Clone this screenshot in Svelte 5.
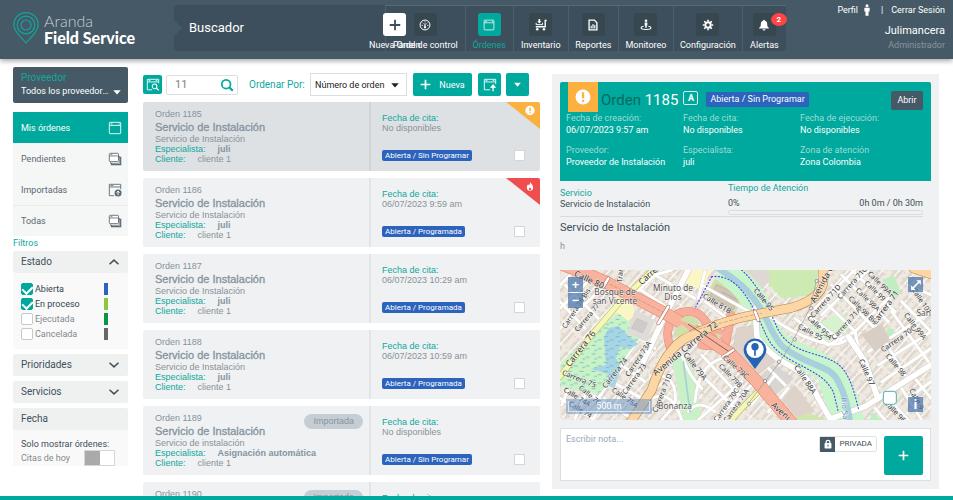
<script>
  const nav = [
    { label: 'Panel de control', icon: 'gauge', grow: 80 },
    { label: 'Órdenes', icon: 'window', grow: 48, active: true },
    { label: 'Inventario', icon: 'cart', grow: 55 },
    { label: 'Reportes', icon: 'report', grow: 50 },
    { label: 'Monitoreo', icon: 'monitor', grow: 55 },
    { label: 'Configuración', icon: 'gear', grow: 69 },
    { label: 'Alertas', icon: 'bell', grow: 44, badge: 2 },
  ];

  const views = [
    { label: 'Pendientes', icon: 'stack' },
    { label: 'Importadas', icon: 'upload' },
    { label: 'Todas', icon: 'stack', split: true },
  ];

  let states = $state([
    { label: 'Abierta', on: true, color: '#2c63bd' },
    { label: 'En proceso', on: true, color: '#8cc63f' },
    { label: 'Ejecutada', on: false, color: '#0b9444' },
    { label: 'Cancelada', on: false, color: '#666666' },
  ]);

  const orders = [
    { id: 1185, sub: 'Servicio de Instalación', who: 'juli', date: 'No disponibles', status: 'Abierta / Sin Programar', flag: 'alert', selected: true },
    { id: 1186, sub: 'Servicio de Instalación', who: 'juli', date: '06/07/2023 9:59 am', status: 'Abierta / Programada', flag: 'fire' },
    { id: 1187, sub: 'Servicio de Instalación', who: 'juli', date: '06/07/2023 10:29 am', status: 'Abierta / Programada' },
    { id: 1188, sub: 'Servicio de Instalación', who: 'juli', date: '06/07/2023 10:59 am', status: 'Abierta / Programada' },
    { id: 1189, sub: 'Servicio de instalación', who: 'Asignación automática', date: 'No disponibles', status: 'Abierta / Sin Programar', imported: true },
    { id: 1190, sub: 'Servicio de instalación', who: 'Asignación automática', date: 'No disponibles', status: 'Abierta / Sin Programar', imported: true },
  ];

  const fields = [
    ['Fecha de creación:', '06/07/2023 9:57 am'],
    ['Fecha de cita:', 'No disponibles'],
    ['Fecha de ejecución:', 'No disponibles'],
    ['Proveedor:', 'Proveedor de Instalación'],
    ['Especialista:', 'juli'],
    ['Zona de atención', 'Zona Colombia'],
  ];

  // Street names: text, centre x, centre y, angle, size
  const streets = [
    ['Calle 80', 102, 46, 25, 26], ['Carrera 76', 78, 252, -52, 26], ['Avenida Carrera 72', 392, 252, -39, 27],
    ['Carre', 280, 34, -42, 26], ['Avenida C', 802, 58, -62, 26], ['Aveni', 676, 440, 42, 26],
    ['Tran', 196, 30, -86, 22], ['Carrera 78 Bis', 64, 130, -57, 21], ['Carrera 77', 96, 158, -50, 21],
    ['Calle 81B', 486, 116, 32, 22], ['Calle 95', 626, 104, 50, 22], ['Calle 79A', 420, 304, 52, 23],
    ['Calle 79C', 542, 306, 42, 22], ['Calle 79B', 526, 332, 46, 21], ['Calle 88A', 750, 344, 56, 23],
    ['Carrera 73A', 250, 282, -56, 22], ['Carrera 74', 180, 324, -52, 22], ['Carrera 73', 238, 342, -54, 22],
    ['Carrera 75', 72, 342, 22, 22], ['Carrera 71D', 322, 384, -68, 22], ['Carrera 70C', 514, 420, -55, 21],
    ['Carrera 70A', 544, 422, -55, 21], ['Calle 74A', 66, 396, 32, 21], ['Calle 76', 104, 390, 40, 21],
    ['Calle 75A', 210, 398, 35, 21], ['Calle 74', 76, 434, 32, 21], ['Carrera 71D', 812, 108, -48, 22],
    ['Carrera 71C', 892, 54, -48, 22], ['Carrera 71A', 874, 176, -48, 22], ['Carrera 71', 992, 128, -54, 24],
    ['Calle 99A', 974, 54, 44, 21], ['Calle 99', 960, 78, 44, 21], ['Calle 98A', 938, 104, 44, 21],
    ['Calle 98 Bis', 924, 136, 44, 21], ['Calle 95A', 794, 188, 44, 22], ['Calle 95', 766, 202, 28, 22],
    ['Calle 99A', 1080, 184, 52, 22], ['Calle 101', 1100, 108, 56, 21], ['Carrera 70C', 1030, 222, -35, 22],
    ['Calle 98', 1022, 300, 50, 22], ['Calle 97', 934, 322, 66, 23], ['Calle 96', 1020, 440, 46, 22],
    ['Calle 9', 1084, 402, 62, 22],
  ];

  const minorRoads = [
    'M15 60 L60 15', 'M15 130 L120 30', 'M15 190 L150 60', 'M30 60 L130 160', 'M15 110 L90 190',
    'M225 100 L300 30 L420 100', 'M250 70 L340 130', 'M300 30 L350 15', 'M210 190 L300 250', 'M180 270 L250 190',
    'M130 400 L300 150', 'M170 430 L290 260', 'M200 300 L270 350', 'M15 340 L130 400 L230 460', 'M15 400 L110 460',
    'M50 350 L20 420', 'M100 370 L60 460', 'M150 400 L110 470', 'M170 350 L260 400', 'M300 330 Q370 330 360 420 L320 465',
    'M290 400 Q350 370 380 465', 'M380 270 Q400 330 440 370', 'M440 270 L560 400', 'M500 250 L610 370', 'M420 410 Q430 300 500 280',
    'M430 465 L560 350', 'M480 465 L600 350', 'M450 340 L540 430', 'M400 440 Q430 400 480 440', 'M440 60 L600 150',
    'M450 110 L530 170', 'M450 20 L430 100', 'M640 150 Q700 200 790 230 Q850 250 880 220', 'M720 160 L820 240 L900 200 L1010 90',
    'M780 130 L900 15', 'M800 150 L940 15', 'M830 60 L960 190', 'M860 30 L1000 170', 'M890 15 L1020 140', 'M760 150 L860 230',
    'M820 120 L900 200', 'M900 200 L920 290 L960 380', 'M960 180 L1050 330', 'M1010 140 L1128 300', 'M1040 110 L1128 200',
    'M940 260 L1128 140', 'M970 300 L1128 200', 'M980 350 L1128 250', 'M1060 60 L1128 90', 'M1080 340 L1128 400', 'M990 390 L1060 465',
    'M1040 370 L1100 465', 'M1060 400 L1128 350', 'M660 330 L590 420', 'M700 370 L640 440', 'M620 290 L690 360', 'M960 430 L990 465',
  ];
</script>

{#snippet icon(name)}
  <svg class="ico" viewBox="0 0 16 16" fill="none" stroke="currentColor" aria-hidden="true">
    {#if name === 'gauge'}
      <circle cx="8" cy="8" r="6.6" stroke-width="1.3" /><path d="M8 12V6" stroke-width="1.6" /><circle cx="8" cy="11" r="1.5" fill="currentColor" stroke="none" />
      <path d="M3.5 8.5h1.6M11 8.5h1.6M4.8 5l1 1M11.2 5l-1 1M8 3.2v1.2" stroke-width="1.2" />
    {:else if name === 'window'}
      <rect x="1.5" y="1.5" width="13" height="13" rx=".8" stroke-width="1" /><path d="M1.5 5h13M3 3.3h2M12 3.3h1.4" stroke-width="1" />
    {:else if name === 'cart'}
      <path d="M15.500 2h-1.900v8.300H1" stroke-width="1.800" /><path d="M1.500 5.200v2.300h8.500V5.200" stroke-width="1.300" /><path d="M4.700 0h2.200v3h1.700L5.800 6 3 3h1.700z" fill="currentColor" stroke="none" />
      <circle cx="3" cy="13.600" r="1.700" fill="currentColor" stroke="none" /><circle cx="12" cy="13.600" r="1.700" fill="currentColor" stroke="none" />
    {:else if name === 'report'}
      <path d="M2.8 1.5h7L13.2 5v9.5H2.8z" stroke-width="1.8" /><path d="M5.6 12.5V9M8 12.5V6.5M10.4 12.5V8" stroke-width="1.5" />
    {:else if name === 'monitor'}
      <circle cx="8" cy="2.4" r="1.7" fill="currentColor" stroke="none" /><path d="M6.2 4.8h3.6v4H9v3H7v-3h-.8z" fill="currentColor" stroke="none" />
      <path d="M4.8 9.6C2.6 10 1.4 10.8 1.4 11.8c0 1.4 3 2.3 6.6 2.3s6.6-.9 6.6-2.3c0-1-1.2-1.8-3.4-2.2" stroke-width="1.4" />
    {:else if name === 'gear'}
      <circle cx="8" cy="8" r="3.6" stroke-width="2.6" /><path d="M8 1v2.4M8 12.6V15M1 8h2.4M12.6 8H15M3 3l1.8 1.8M11.2 11.2 13 13M13 3l-1.8 1.8M4.8 11.2 3 13" stroke-width="2.2" />
    {:else if name === 'bell'}
      <path d="M8 1c.8 0 1.2.5 1.2 1.2 2 .5 3 2 3 4 0 3.200.7 4.300 2.300 5.600v.8H1.500v-.8c1.600-1.300 2.300-2.400 2.300-5.600 0-2 1-3.500 3-4C6.800 1.500 7.200 1 8 1z" fill="currentColor" stroke="none" /><path d="M6 13.600h4a2 1.800 0 0 1-4 0z" fill="currentColor" stroke="none" />
    {:else if name === 'stack'}
      <path d="M4 12.500v2h10.500V6h-2" stroke-width="1.400" /><path d="M3 11v2h10V4.500" stroke-width=".8" /><rect x="1.500" y="1.500" width="10.500" height="9.500" rx="1" fill="#fff" stroke-width="1" /><path d="M1.500 4.500H12M3 3h2" stroke-width=".9" />
    {:else if name === 'upload'}
      <path d="M7 14.500H1.500v-13h13V7M1.500 4.500h13M3 3h3" stroke-width="1" /><circle cx="11.500" cy="11.500" r="4" fill="currentColor" stroke="none" /><path d="M11.500 14v-4.500M9.800 11l1.700-1.800 1.700 1.800" stroke="#fff" stroke-width="1.100" />
    {:else if name === 'find'}
      <path d="M7 13.500H1.500v-12h13V6M1.500 4.500h13M3 3h2M11 3h2" stroke-width="1" /><circle cx="9.800" cy="9.500" r="2.700" stroke-width="1.200" /><path d="m12 11.700 2.500 2.500" stroke-width="1.400" />
    {:else if name === 'send'}
      <path d="M8 13.500H1.500v-12h13V7M1.500 4.500h13M3 3h2M11 3h2" stroke-width="1" /><path d="M11.500 15V9M9.500 10.500l2-2.500 2 2.500z" fill="currentColor" stroke-width="1.500" />
    {:else if name === 'search'}
      <circle cx="7" cy="7" r="5" stroke-width="2" /><path d="m10.600 10.600 4 4" stroke-width="2.400" />
    {:else if name === 'plus'}
      <path d="M8 1v14M1 8h14" stroke-width="2.400" />
    {:else if name === 'down'}
      <path d="M2 5h12l-6 7z" fill="currentColor" stroke="none" />
    {:else if name === 'chevdown'}
      <path d="m2 5 6 5.500L14 5" stroke-width="2" />
    {:else if name === 'chevup'}
      <path d="m2 11 6-5.500 6 5.500" stroke-width="2" />
    {:else if name === 'alert'}
      <circle cx="8" cy="8" r="7.500" fill="#fff" stroke="none" /><path d="M8 3.200v6M8 10.800v2" stroke="#fbb040" stroke-width="2.200" />
    {:else if name === 'fire'}
      <path d="M8.500.5c.5 3 4.500 5 4.500 9a5 5.300 0 0 1-10 0C3 7 4.300 6 4.800 4.500c1 .6 1.400 1.300 1.500 2C7.800 5 8.600 3 8.500.5z" fill="#fff" stroke="none" /><path d="M8 9c.3 1.200 2 1.600 2 3a2 1.800 0 0 1-4 0C6 11 7.200 10.400 8 9z" fill="#f04e4e" stroke="none" />
    {:else if name === 'person'}
      <circle cx="8" cy="2.200" r="2" fill="currentColor" stroke="none" /><path d="M4.500 5h7v5H10v5.500H6V10H4.500z" fill="currentColor" stroke="none" />
    {:else if name === 'lock'}
      <path d="M5 7V5a3 3 0 0 1 6 0v2" stroke-width="2" /><rect x="2.500" y="6.500" width="11" height="8.500" rx="1" fill="currentColor" stroke="none" /><path d="M8 9v3" stroke="#455a66" stroke-width="1.600" />
    {:else if name === 'expand'}
      <path d="m3.500 12.500 9-9" stroke-width="2" /><path d="M8.500 1.500h6v6zM1.500 8.500v6h6z" fill="currentColor" stroke="none" />
    {/if}
  </svg>
{/snippet}

<div class="app">
  <header class="top">
    <a class="brand" href="#inicio">
      <svg viewBox="0 0 26 32" fill="none" stroke="#10a79d" stroke-width="1.200" aria-hidden="true">
        <path d="M13 31C9 26 .8 20 .8 12.800a12.200 12.200 0 0 1 24.400 0C25.200 20 17 26 13 31z" />
        <circle cx="13" cy="13" r="8.800" /><circle cx="13" cy="13" r="5" />
      </svg>
      <span class="words"><span>Aranda</span><b>Field Service</b></span>
    </a>
    <div class="bar">
      <span class="finder">Buscador</span>
      <nav>
        <a class="new" href="#nueva"><span class="tile">{@render icon('plus')}</span><span>Nueva Orden</span></a>
        {#each nav as n}
          <a class="tab" class:active={n.active} href="#{n.icon}" style="flex-grow: {n.grow}">
            <span class="tile">{@render icon(n.icon)}{#if n.badge}<i class="badge">{n.badge}</i>{/if}</span>
            <span>{n.label}</span>
          </a>
        {/each}
      </nav>
    </div>
    <div class="user">
      <div class="links"><a href="#perfil">Perfil {@render icon('person')}</a><span>|</span><a href="#salir">Cerrar Sesión</a></div>
      <div class="name">Julimancera</div>
      <div class="role">Administrador</div>
    </div>
  </header>

  <main>
    <aside>
      <div class="provider">
        <label for="prov">Proveedor</label>
        <div class="pick"><select id="prov"><option>Todos los proveedores de servicio</option></select>{@render icon('down')}</div>
      </div>
      <a class="mine" href="#mis">Mis órdenes {@render icon('window')}</a>
      <div class="views">
        {#each views as v}
          <a href="#{v.label}" class:split={v.split}>{v.label} {@render icon(v.icon)}</a>
        {/each}
      </div>
      <div class="filters">Filtros</div>
      <button class="fold">Estado {@render icon('chevup')}</button>
      <div class="states">
        {#each states as s}
          <label class:off={!s.on}><input type="checkbox" bind:checked={s.on} /><span>{s.label}</span><i style="background: {s.color}"></i></label>
        {/each}
      </div>
      <button class="fold gap">Prioridades {@render icon('chevdown')}</button>
      <button class="fold gap">Servicios {@render icon('chevdown')}</button>
      <div class="fold gap">Fecha</div>
      <div class="dates">
        <span>Solo mostrar órdenes:</span>
        <label>Citas de hoy <input type="checkbox" /></label>
      </div>
    </aside>

    <section class="list">
      <div class="tools">
        <button class="sq" aria-label="Búsqueda avanzada">{@render icon('find')}</button>
        <div class="search"><input type="text" value="11" aria-label="Buscar" />{@render icon('search')}</div>
        <label for="sort">Ordenar Por:</label>
        <div class="sort"><select id="sort"><option>Número de orden</option></select>{@render icon('down')}</div>
        <button class="add">{@render icon('plus')} Nueva</button>
        <button class="sq wide" aria-label="Exportar">{@render icon('send')}</button>
        <button class="sq small" aria-label="Más">{@render icon('down')}</button>
      </div>
      {#each orders as o}
        <article class:selected={o.selected}>
          <div class="info">
            <span class="num">Orden {o.id}</span>
            <h3>Servicio de Instalación</h3>
            <span>{o.sub}</span>
            <span><em>Especialista:</em><b>{o.who}</b></span>
            <span><em>Cliente:</em>cliente 1</span>
            {#if o.imported}<span class="imported">Importada</span>{/if}
          </div>
          <div class="when">
            <em>Fecha de cita:</em>
            <span>{o.date}</span>
            <div class="foot"><span class="tag">{o.status}</span><input type="checkbox" aria-label="Seleccionar orden {o.id}" /></div>
            {#if o.flag}<span class="flag {o.flag}">{@render icon(o.flag)}</span>{/if}
          </div>
        </article>
      {/each}
    </section>

    <section class="detail">
      <div class="head">
        <div class="title">
          <span class="warn">{@render icon('alert')}</span>
          <h2>Orden <b>1185</b></h2>
          <span class="letter">A</span>
          <span class="status">Abierta / Sin Programar</span>
          <button>Abrir</button>
        </div>
        <dl>
          {#each fields as [k, v]}<div><dt>{k}</dt><dd>{v}</dd></div>{/each}
        </dl>
      </div>
      <div class="service">
        <div class="svc"><span class="teal">Servicio</span><span>Servicio de Instalación</span></div>
        <div class="time">
          <span class="teal">Tiempo de Atención</span>
          <div class="row"><span>0%</span><span>0h 0m / 0h 30m</span></div>
          <div class="progress"></div>
        </div>
      </div>
      <div class="desc">Servicio de Instalación</div>
      <div class="note-text">h</div>

      <div class="map">
        <svg viewBox="15 15 1113 450" preserveAspectRatio="xMidYMid slice" role="img" aria-label="Mapa de la orden">
          <defs>
            <pattern id="blocks" width="54" height="38" patternUnits="userSpaceOnUse" patternTransform="rotate(-48)">
              <rect width="54" height="38" fill="#eee9e1" /><path d="M4 8h44v8H4zM4 22h44v8H4z" fill="#ded7cd" /><path d="M14 8v8M25 8v8M37 8v8M20 22v8M33 22v8" stroke="#eee9e1" /><path d="M0 19h54" stroke="#fff" stroke-width="3" />
            </pattern>
            <pattern id="plots" width="44" height="40" patternUnits="userSpaceOnUse" patternTransform="rotate(38)">
              <path d="M5 12v2M24 5v2M35 26v2" stroke="#ee9a90" stroke-width="3" /><path d="M10 27h9v5h-9z" fill="#dcd3ca" />
            </pattern>
            <pattern id="reeds" width="36" height="26" patternUnits="userSpaceOnUse"><path d="M2 7h12M20 17h12M10 22h8" stroke="#55a9cf" stroke-width="2" /></pattern>
          </defs>
          <rect x="0" y="0" width="1140" height="480" fill="#f0ece5" />
          <rect x="0" y="0" width="1140" height="480" fill="url(#blocks)" />
          <rect x="0" y="0" width="1140" height="480" fill="url(#plots)" />
          <path d="M400 15h70l-30 60-50-20zM180 130l50-30 10 50-40 40z" fill="#fbf7c5" />
          <path d="M350 280l40-10 30 60 20 135h-55z" fill="#c9f0c7" />
          <path d="M480 42l90 45-28 56-88-52z" fill="#d0dfa9" /><path d="M485 58l70 36-20 40-70-42z" fill="#d1c3b8" stroke="#b8aa9e" stroke-width="2" /><path d="M500 80l45 24M492 92l42 24" stroke="#b8aa9e" stroke-width="3" />
          <path d="M625 15h165l-10 75-100 10-40-45z" fill="#cdeab2" /><path d="M560 15h70l20 25-35 40z" fill="#ddd8d3" />
          <path d="M655 300l60 40-55 50-50-50z" fill="#d9d5d2" stroke="#c7bfb8" /><path d="M720 360l60 80-50 25-50-60z" fill="#ddd3cb" /><path d="M625 345l28 22-22 20-26-14z" fill="#a9ddc5" />
          <path d="M760 190l100-50 30 45-80 50z" fill="#d6f2cf" /><path d="M985 45l30-15 22 48-18 25zM1000 185l18 10-10 20-16-8z" fill="#bfeec3" />
          <path d="M505 10C560 55 600 90 625 165S680 250 740 275 830 320 850 360 880 410 888 470" fill="none" stroke="#c9f5cc" stroke-width="76" />
          <path d="M790 350l50-20 70 135h-80z" fill="#c9f5cc" /><path d="M700 465l60-20 60 20z" fill="#d0e6ab" /><path d="M950 440l30 25h-35z" fill="#bfeec3" />

          <g fill="none" stroke-linecap="round" stroke-linejoin="round">
            {#each minorRoads as d}<path {d} stroke="#d2ccc4" stroke-width="11" />{/each}
            {#each minorRoads as d}<path {d} stroke="#fff" stroke-width="9" />{/each}
          </g>
          <path d="M130 190l60-45 40 30 25 45-40 50-35 60-45 55-55-5-70-20 10-70z" fill="#c9f2c6" />
          <path d="M160 190l30-8 30 30 30 25-25 16-30-8-12 35 15 30-20 60-16-8-4-35-50-15 45-12-6-80z" fill="#a7d5e3" />
          <path d="M130 190l60-45 40 30 25 45-40 50-35 60-45 55-55-5-70-20 10-70z" fill="url(#reeds)" />
          <path d="M240 135l60 30-28 65-55-25z" fill="#dedbd8" /><path d="M245 160l32 14-14 30-34-14z" fill="#cfcbc8" stroke="#b9b5b1" />
          <path d="M545 190l50-8 10 50 55 60-60 40-70-60z" fill="#ddd3cb" stroke="#c8b9ad" />
          <path d="M920 210l60-35 25 50-45 35z" fill="#d9cec5" />
          <g fill="none" stroke-linecap="round" stroke-linejoin="round">
            <path d="M600 130L606 215Q640 270 700 300T790 400L830 470M830 460L930 425 1128 300M265 290L330 150 400 15M880 215L930 290 965 390" stroke="#ccc6be" stroke-width="20" />
            <path d="M600 130L606 215Q640 270 700 300T790 400L830 470M830 460L930 425 1128 300M265 290L330 150 400 15M880 215L930 290 965 390" stroke="#fff" stroke-width="17" />
            <path d="M490 10C560 55 600 90 635 165S680 250 740 280 830 310 850 350 875 410 885 470" stroke="#a7d0dc" stroke-width="19" />
            <path d="M470 35C550 25 590 120 615 170S640 250 720 292 810 340 835 380L850 440M560 15C620 70 645 140 665 185S720 250 770 265 850 290 870 320 900 390 910 430M470 35L420 130" stroke="#4548ee" stroke-width="3.500" stroke-dasharray="3 7" />
            <path d="M385 290L405 440" stroke="#a7d0dc" stroke-width="5" />
            <path d="M15 335L110 210 200 105 305 5M520 475L560 430 620 370" stroke="#aeb64e" stroke-width="18" />
            <path d="M15 335L110 210 200 105 305 5M520 475L560 430 620 370" stroke="#f4f7b5" stroke-width="15" />
            <path d="M345 245C325 190 350 135 405 140S435 185 515 215L528 150L510 245L440 240" stroke="#e3836e" stroke-width="26" />
            <path d="M345 245C325 190 350 135 405 140S435 185 515 215L528 150L510 245L440 240" stroke="#f7ad99" stroke-width="23" />
            <path d="M15 -5L150 50 330 145 440 210 525 265 610 355 715 480" stroke="#e3836e" stroke-width="38" />
            <path d="M15 -5L150 50 330 145 440 210 525 265 610 355 715 480" stroke="#f9b29c" stroke-width="35" />
            <path d="M225 475L290 375Q330 250 400 215T570 155L710 128Q800 100 805 50V5M1075 10L1135 30" stroke="#b98136" stroke-width="29" />
            <path d="M225 475L290 375Q330 250 400 215T570 155L710 128Q800 100 805 50V5M1075 10L1135 30" stroke="#fcd6a4" stroke-width="26" />
            <path d="M150 50L330 145M400 200L570 155 620 145" stroke="#b59383" stroke-width="2" stroke-dasharray="9 7" />
            <path d="M400 178L525 262" stroke="#7e5f54" stroke-width="3" />
            <path d="M340 125L310 175M505 275L535 255M160 40L145 65M600 140L610 165" stroke="#a45f52" stroke-width="11" /><path d="M340 125L310 175M505 275L535 255M160 40L145 65M600 140L610 165" stroke="#fff" stroke-width="8" />
            <path d="M785 45L765 130 715 225 675 290 630 350 580 415" stroke="#999" stroke-width="2" />
          </g>
          <path d="M375 165q35-30 60 10l-15 8zM358 195l22-18 25 20-45 22zM480 205l22 5-10 12z" fill="#cfe0ab" />
          {#each [[785, 48], [768, 130], [719, 223], [672, 290], [630, 348], [582, 416]] as [x, y]}<circle cx={x} cy={y} r="5" fill="#eee" stroke="#777" stroke-width="2" />{/each}

          <g class="names" text-anchor="middle">
            {#each streets as [t, x, y, a, s]}
              <text transform="translate({x} {y}) rotate({a})" dy="7" font-size={s}>{t}</text>
            {/each}
            <g class="place" font-size="25">
              <text x="180" y="89">Bosque de</text><text x="180" y="117">san Vicente</text>
              <text x="354" y="78">Minuto de</text><text x="354" y="106">Dios</text>
              <text x="360" y="432">Bonanza</text><text x="1106" y="154">San</text>
            </g>
            <text class="river" transform="translate(868 430) rotate(83)" dy="7" font-size="23">Río Sa</text>
          </g>
          <path d="M600 312L572 274a34 34 0 1 1 56 0z" fill="#2563b5" /><circle cx="600" cy="253" r="26" fill="#fff" /><circle cx="600" cy="245" r="11" fill="#2563b5" /><path d="M600 250v22" stroke="#2563b5" stroke-width="5" />
          <rect x="985" y="379" width="39" height="39" rx="8" fill="#fff" stroke="#4eb0aa" stroke-width="3" />
        </svg>
        <div class="zoom"><button aria-label="Acercar">+</button><button aria-label="Alejar">−</button></div>
        <button class="full" aria-label="Pantalla completa">{@render icon('expand')}</button>
        <button class="about" aria-label="Información">i</button>
        <div class="scale"><span>500 m</span></div>
      </div>

      <div class="note">
        <textarea placeholder="Escribir nota..." aria-label="Escribir nota"></textarea>
        <button class="private"><span>{@render icon('lock')}</span>PRIVADA</button>
        <button class="send" aria-label="Agregar nota">{@render icon('plus')}</button>
      </div>
    </section>
  </main>
  <footer></footer>
</div>

<style>
  :global(body) { background: #fff; }
  * { box-sizing: border-box; }
  .app { height: 100vh; display: flex; flex-direction: column; overflow: hidden; font: 9px/12px Roboto, "Noto Sans", sans-serif; color: #3f4f59; }
  a { color: inherit; text-decoration: none; }
  button, input, select, textarea { font: inherit; color: inherit; margin: 0; border: 0; padding: 0; }
  button { display: flex; align-items: center; justify-content: center; }
  select { appearance: none; background: none; text-overflow: ellipsis; }
  i, em { font-style: normal; }
  .ico { display: block; width: 12px; height: 12px; flex: none; }
  input[type="checkbox"] { appearance: none; background: #fff; border: 1px solid #d4d6d8; flex: none; }

  .top { flex: none; height: 59px; background: #455a66; display: flex; color: #fff; position: relative; box-shadow: 0 2px 5px rgba(0, 0, 0, .35); }
  .brand { width: 174px; flex: none; padding: 12px 0 0 13px; display: flex; gap: 5px; }
  .brand svg { width: 26px; height: 32px; }
  .words { display: flex; flex-direction: column; font: 16px/17px Lato, sans-serif; white-space: nowrap; }
  .words span { color: #c7ced2; font-weight: 300; }
  .words b { font-weight: 900; }
  .bar { flex: 1; max-width: 612px; margin: 5px 0 8px; border-radius: 3px; background: #3d4f5c; display: flex; position: relative; }
  .bar::before { content: ""; position: absolute; top: 15px; border: 8px solid transparent; border-left-color: #455a66; border-right: 0; }
  .finder { flex: 1; padding: 15px; font-size: 13px; line-height: 16px; }
  nav { display: flex; width: 401px; position: relative; border-top: 1px solid #566974; font-size: 9px; }
  nav a { display: flex; flex-direction: column; align-items: center; gap: 4px; padding-top: 7px; white-space: nowrap; line-height: 10px; }
  .tab { flex: 1 1 0; width: 0; border-left: 1px solid #4c606b; }
  .tile { width: 23px; height: 23px; border-radius: 3px; background: #36474f; display: flex; align-items: center; justify-content: center; position: relative; }
  .tab.active { color: #10a79d; }
  .active .tile { background: #00a99d; color: #fff; }
  .new { position: absolute; left: -16px; top: 0; }
  .new .tile { background: #fff; color: #3d4f5c; }
  .badge { position: absolute; left: 18px; top: 0; width: 16px; height: 13px; border-radius: 50%; background: #ff4444; font-size: 8px; line-height: 13px; font-weight: 700; text-align: center; }
  .user { width: 167px; flex: none; margin-left: auto; padding: 4px 8px 0 0; text-align: right; }
  .links { display: flex; justify-content: flex-end; gap: 8px; line-height: 12px; }
  .links a { display: flex; gap: 3px; align-items: center; }
  .name { margin-top: 8px; font-size: 11px; line-height: 14px; }
  .role { color: #8795a0; line-height: 14px; }

  main { flex: 1; min-height: 0; display: flex; padding: 0 14px 0 13px; }
  aside { width: 115px; flex: none; margin: 8px 15px 30px 0; overflow: hidden; }
  .provider { background: #455a66; border-radius: 2px; padding: 4px 6px 4px 8px; height: 36px; }
  .provider label { display: block; color: #10a79d; font-size: 10px; line-height: 13px; }
  .pick { display: flex; align-items: center; gap: 1px; color: #fff; line-height: 15px; }
  .pick select { flex: 1; min-width: 0; }
  .pick select option { color: #333; }
  .pick .ico { width: 10px; }
  .mine { margin-top: 9px; height: 31px; background: #00a99d; color: #fff; }
  .mine, .views a { display: flex; align-items: center; justify-content: space-between; padding: 0 6px 0 8px; }
  .views a .ico, .mine .ico { width: 14px; height: 14px; }
  .views { background: #f5f6f6; }
  .views a { height: 31px; color: #5b6971; }
  .views .split { border-top: 1px solid #eaecec; }
  .filters { color: #10a79d; line-height: 15px; }
  .fold { width: 100%; height: 22px; background: #eff0f0; border-radius: 2px; padding: 0 8px; display: flex; align-items: center; justify-content: space-between; font-size: 10px; color: #3f515c; }
  .gap { margin-top: 5px; }
  .states { background: #f9f9f9; padding: 8px; height: 76px; }
  .states label { display: flex; align-items: center; gap: 2px; height: 15px; color: #35444d; }
  .states label.off { color: #84898c; }
  .states input { width: 12px; height: 12px; border: 1px solid #c6c8c9; border-radius: 2px; display: flex; justify-content: center; }
  .states input:checked { background: #00a99d; border-color: #00a99d; }
  .states input:checked::after { content: ""; width: 5px; height: 8px; border: solid #fff; border-width: 0 2px 2px 0; transform: rotate(45deg); }
  .states span { flex: 1; }
  .states i { width: 4px; height: 12px; margin-right: 12px; }
  .dates { background: #f9f9f9; padding: 8px; }
  .dates label { display: flex; justify-content: space-between; color: #84898c; line-height: 16px; padding-right: 5px; }
  .dates input { width: 31px; height: 16px; display: flex; }
  .dates input::before { content: ""; width: 15px; background: #aaa; }

  .list { flex: 1 1 397px; min-width: 0; overflow: hidden; padding-top: 15px; display: flex; flex-direction: column; gap: 7px; font: 9px/10px "Liberation Sans", Arial, sans-serif; }
  .tools { display: flex; align-items: center; height: 21px; flex: none; padding-right: 11px; font: 9px/12px Roboto, "Noto Sans", sans-serif; }
  .tools button { background: #00a99d; color: #fff; border-radius: 2px; height: 23px; flex: none; }
  .tools button.sq { width: 23px; }
  .tools button.sq:first-child { width: 19px; height: 19px; }
  .sq .ico { width: 14px; height: 14px; }
  .sq.wide { margin-right: 5px; }
  .sq.small .ico { width: 9px; height: 9px; }
  .search { display: flex; align-items: center; width: 72px; height: 20px; margin: 0 11px 0 4px; padding: 0 3px 0 8px; border: 1px solid #dcdedf; border-radius: 2px; color: #00a99d; }
  .search input { min-width: 0; flex: 1; color: #7b8287; font-size: 11px; outline: 0; }
  .search .ico { width: 14px; height: 14px; }
  .tools label { color: #10a79d; font-size: 10px; white-space: nowrap; }
  .sort { display: flex; align-items: center; flex: 1; max-width: 97px; height: 23px; margin: 0 6px 0 auto; padding: 0 6px 0 4px; border: 1px solid #dcdedf; color: #222; }
  .sort select { flex: 1; min-width: 0; }
  .sort .ico { width: 10px; height: 10px; }
  .add { width: 59px; gap: 8px; margin-right: 6px; }
  .add .ico { width: 11px; height: 11px; }
  article { height: 69px; flex: none; display: flex; background: #eff1f2; border-radius: 2px; color: #8a9299; overflow: hidden; }
  article.selected { background: #dde1e4; }
  article em { color: #10a79d; }
  .info { flex: 1 1 228px; border-right: 2px solid rgba(0, 0, 0, .05); padding: 6px 12px; display: flex; flex-direction: column; position: relative; }
  .info em { display: inline-block; margin-right: 12px; }
  .info b { color: #8593a0; }
  .num { line-height: 12px; }
  .num, h3 { color: #8593a0; }
  h3 { margin: 0; font-size: 11px; line-height: 14px; font-weight: 400; -webkit-text-stroke: .3px; }
  .imported { position: absolute; right: 6px; top: 8px; padding: 0 9px; border-radius: 8px; background: #c6ced5; line-height: 15px; }
  .when { flex: 1 1 169px; padding: 11px 15px 10px 11px; display: flex; flex-direction: column; position: relative; }
  .foot { display: flex; justify-content: space-between; align-items: center; margin-top: auto; }
  .foot input { width: 11px; height: 11px; }
  .tag { background: #2c63bd; color: #fff; border-radius: 2px; padding: 0 3px; font: 8px/11px Roboto, sans-serif; }
  .flag { position: absolute; right: 0; top: 0; width: 34px; height: 27px; clip-path: polygon(0 0, 100% 0, 100% 100%); background: #fbb040; display: flex; justify-content: flex-end; padding: 3px 5px; }
  .flag.fire { background: #f04e4e; }
  .flag .ico { width: 10px; height: 11px; }

  .detail { flex: 1 1 387px; min-width: 0; margin: 15px 0 7px 12px; padding: 8px; background: #eff1f2; display: flex; flex-direction: column; }
  .head { height: 99px; flex: none; background: #00a99d; border-radius: 2px 2px 0 0; color: #fff; }
  .title { display: flex; align-items: center; height: 30px; padding: 0 8px; }
  .warn { width: 30px; height: 30px; background: #fbb040; display: flex; align-items: center; justify-content: center; margin-right: 3px; }
  .warn .ico { width: 16px; height: 16px; }
  h2 { margin: 5px 5px 0 0; font-size: 15px; line-height: 18px; font-weight: 400; color: #08695f; }
  h2 b { color: #fff; font-weight: 400; }
  .letter { width: 15px; height: 14px; border: 1px solid #d9f2f0; border-radius: 2px; text-align: center; line-height: 12px; font-weight: 700; margin: 2px 8px 0 0; }
  .status { background: #2c63bd; border-radius: 2px; padding: 0 4px; line-height: 15px; margin-top: 5px; }
  .title button { margin: 6px 0 0 auto; background: #455a66; width: 32px; height: 19px; border-radius: 2px; }
  dl { margin: 0; padding: 0 14px 0 6px; display: grid; grid-template-columns: repeat(3, 1fr); row-gap: 8px; }
  dt { color: #9bdcd7; line-height: 12px; }
  dd { margin: 0; line-height: 12px; white-space: nowrap; }
  .service { flex: none; display: flex; height: 36px; margin-right: 8px; border-bottom: 1px solid #d9dcde; }
  .svc { flex: 168; padding-top: 7px; display: flex; flex-direction: column; line-height: 11px; }
  .time { flex: 195; }
  .teal { color: #10a79d; }
  .time .teal { display: block; line-height: 15px; }
  .row { display: flex; justify-content: space-between; line-height: 14px; }
  .progress { height: 5px; border: 1px solid #dcdcde; border-radius: 3px; background: #f3f1f2; }
  .desc { font-size: 11px; line-height: 22px; }
  .note-text { color: #8593a0; line-height: 14px; height: 31px; flex: none; }
  .map { flex: 150 1 0; min-height: 0; position: relative; overflow: hidden; }
  .map > svg { display: block; width: 100%; height: 100%; }
  .names { font-family: "Noto Sans", sans-serif; fill: #333; stroke: rgba(255, 255, 255, .7); stroke-width: 3; paint-order: stroke; }
  .place { fill: #555; }
  .river { fill: #5d8fb8; }
  .map button { background: rgba(70, 115, 170, .72); color: #fff; width: 15px; height: 15px; font: 700 13px/13px "Noto Sans", sans-serif; }
  .zoom { position: absolute; left: 8px; top: 7px; display: flex; flex-direction: column; gap: 1px; }
  .map .full { position: absolute; right: 8px; top: 7px; }
  .map .about { position: absolute; right: 8px; bottom: 8px; }
  .scale { position: absolute; left: 6px; bottom: 6px; background: rgba(100, 145, 195, .5); padding: 2px; width: 86px; }
  .scale span { display: block; border: 1px solid #dbe5ef; border-top: 0; color: #fff; text-align: center; line-height: 10px; }
  .note { flex: none; margin-top: 8px; height: 53px; background: #fff; border: 1px solid #dcdee0; display: flex; padding: 4px 7px 6px 5px; align-items: flex-start; }
  .note textarea { flex: 1; min-width: 0; height: 100%; resize: none; outline: 0; }
  .note textarea::placeholder { color: #9aa8ba; }
  .private { background: #fff; border: 1px solid #dfe1e3; border-radius: 2px; height: 16px; margin: 3px 7px 0 0; padding-right: 4px; gap: 4px; font-size: 8px; }
  .private span { width: 15px; height: 15px; background: #455a66; color: #fff; display: flex; align-items: center; justify-content: center; }
  .private .ico { width: 10px; height: 10px; }
  .send { width: 39px; height: 39px; margin-top: 3px; background: #00a99d; color: #fff; border-radius: 2px; }
  .send .ico { width: 11px; height: 11px; }
  footer { height: 4px; flex: none; background: #00a99d; }
</style>
